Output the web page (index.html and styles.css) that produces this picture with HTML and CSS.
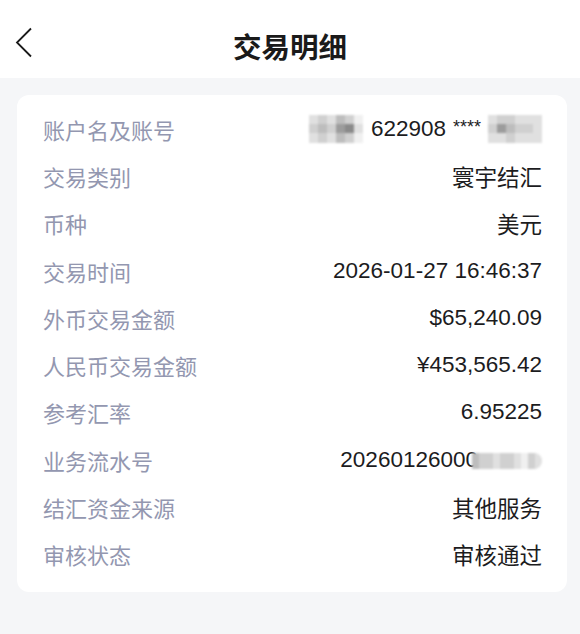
FILE: index.html
```html
<!DOCTYPE html>
<html lang="zh-CN">
<head>
    <meta charset="UTF-8">
    <meta name="viewport" content="width=device-width, initial-scale=1.0">
    <title>交易明细</title>
    <link rel="stylesheet" href="styles.css">
</head>
<body>
    <div class="header">
        <svg class="back" width="18" height="32" viewBox="0 0 18 32">
            <polyline points="16,1.5 2,15.5 16,29.5" fill="none" stroke="#1a1a1a" stroke-width="1.8"/>
        </svg>
        <h1>交易明细</h1>
    </div>

    <div class="card">
        <div class="row">
            <span class="label">账户名及账号</span>
            <span class="value account">
                <span class="mosaic m-a">
                    <i class="s1"></i><i class="s2"></i><i class="s1"></i><i class="s3"></i><i class="s2"></i><i class="s0"></i>
                    <i class="s2"></i><i class="s3"></i><i class="s2"></i><i class="s4"></i><i class="s5"></i><i class="s1"></i>
                    <i class="s1"></i><i class="s2"></i><i class="s1"></i><i class="s3"></i><i class="s2"></i><i class="s0"></i>
                </span>
                622908 <span class="stars">****</span>
                <span class="mosaic m-b">
                    <i class="s1"></i><i class="s2"></i><i class="s2"></i><i class="s1"></i><i class="s1"></i><i class="s1"></i>
                    <i class="s2"></i><i class="s4"></i><i class="s3"></i><i class="s2"></i><i class="s2"></i><i class="s1"></i>
                    <i class="s1"></i><i class="s1"></i><i class="s2"></i><i class="s1"></i><i class="s1"></i><i class="s1"></i>
                </span>
            </span>
        </div>
        <div class="row">
            <span class="label">交易类别</span>
            <span class="value">寰宇结汇</span>
        </div>
        <div class="row">
            <span class="label">币种</span>
            <span class="value">美元</span>
        </div>
        <div class="row">
            <span class="label">交易时间</span>
            <span class="value">2026-01-27 16:46:37</span>
        </div>
        <div class="row">
            <span class="label">外币交易金额</span>
            <span class="value">$65,240.09</span>
        </div>
        <div class="row">
            <span class="label">人民币交易金额</span>
            <span class="value">¥453,565.42</span>
        </div>
        <div class="row">
            <span class="label">参考汇率</span>
            <span class="value">6.95225</span>
        </div>
        <div class="row">
            <span class="label">业务流水号</span>
            <span class="value serial">
                20260126000
                <span class="mosaic m-c">
                    <i class="s3"></i><i class="s2"></i><i class="s2"></i><i class="s1"></i><i class="s2"></i>
                    <i class="s2"></i><i class="s1"></i><i class="s0"></i><i class="s2"></i><i class="s1"></i>
                </span>
            </span>
        </div>
        <div class="row">
            <span class="label">结汇资金来源</span>
            <span class="value">其他服务</span>
        </div>
        <div class="row">
            <span class="label">审核状态</span>
            <span class="value">审核通过</span>
        </div>
    </div>
</body>
</html>
```

FILE: styles.css
```css
body {
    margin: 0;
    background-color: #f5f6f8;
    font-family: "Liberation Sans", "Noto Sans CJK SC", sans-serif;
    color: #1c1c1e;
}

.header {
    position: relative;
    height: 78px;
    background: #fff;
    display: flex;
    align-items: center;
    justify-content: center;
}
.header h1 {
    margin: 0;
    margin-top: 12px;
    font-family: "Noto Sans CJK SC", sans-serif;
    font-size: 28.5px;
    font-weight: 700;
    color: #1a1a1a;
}
.back {
    position: absolute;
    left: 15px;
    top: 27px;
}

.card {
    margin: 17px 13px 0 17px;
    background: #fff;
    border-radius: 12px;
    padding: 10px 25px 14px 26px;
}
.row {
    height: 47.3px;
    display: flex;
    align-items: center;
    justify-content: space-between;
}
.label {
    font-family: "Noto Sans CJK SC", sans-serif;
    font-size: 22px;
    color: #9397b0;
}
.value {
    font-size: 22.5px;
    color: #1c1c1e;
    display: flex;
    align-items: center;
}
.account {
    gap: 7px;
}
.stars {
    font-size: 18px;
    align-self: flex-start;
    margin-top: 2px;
}

.mosaic {
    display: grid;
    grid-template-columns: repeat(6, 9px);
    grid-auto-rows: 9.3px;
    filter: blur(0.8px);
}
.mosaic i {
    display: block;
}
.m-a {
    margin-right: 1px;
}
.m-c {
    grid-template-columns: repeat(10, 7px);
    grid-auto-rows: 16px;
    border-radius: 0 8px 8px 0;
    overflow: hidden;
    margin-left: -6px;
    margin-top: 2px;
}
.s0 { background: #f0f0f0; }
.s1 { background: #e0e0e0; }
.s2 { background: #d0d0d0; }
.s3 { background: #bdbdbd; }
.s4 { background: #9c9c9c; }
.s5 { background: #8a8a8a; }
```
